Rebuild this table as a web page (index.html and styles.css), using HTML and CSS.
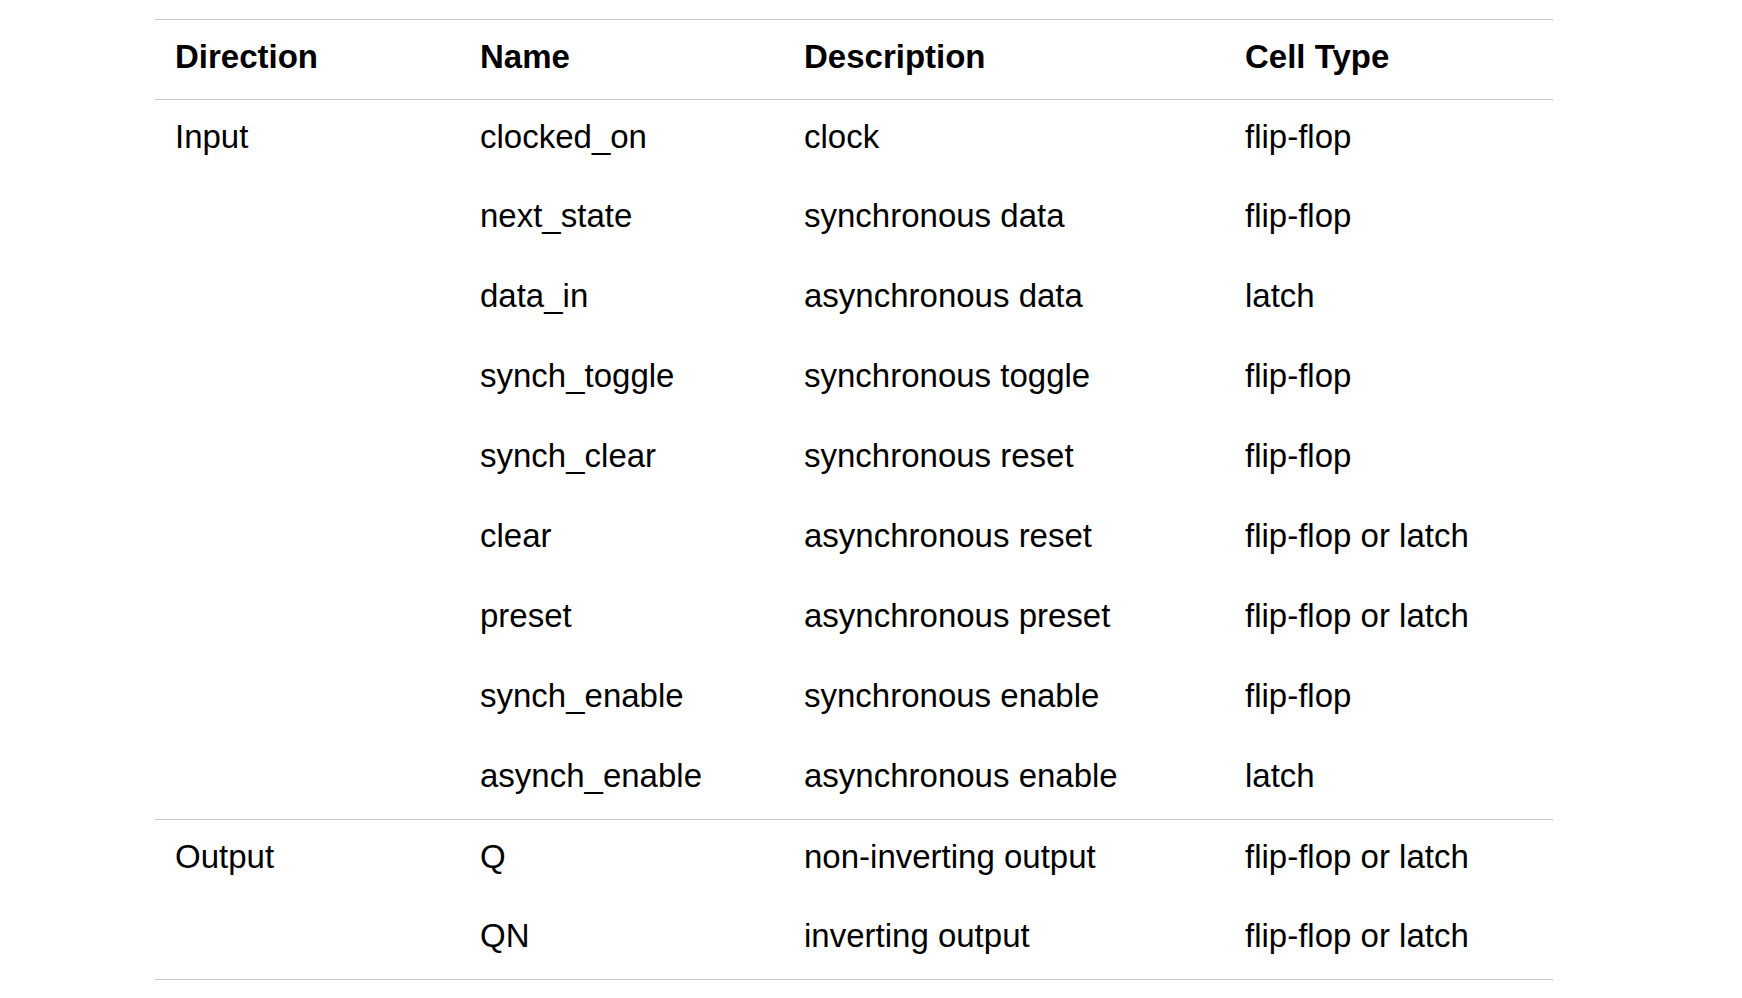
FILE: index.html
```html
<!DOCTYPE html>
<html>
<head>
<meta charset="utf-8">
<link rel="stylesheet" href="styles.css">
</head>
<body>
<div class="pins" role="table">
  <div class="row head start" role="row">
    <div class="cell" role="columnheader">Direction</div>
    <div class="cell" role="columnheader">Name</div>
    <div class="cell" role="columnheader">Description</div>
    <div class="cell" role="columnheader">Cell Type</div>
  </div>
  <div class="row start" role="row"><div class="cell">Input</div><div class="cell">clocked_on</div><div class="cell">clock</div><div class="cell">flip-flop</div></div>
  <div class="row" role="row"><div class="cell"></div><div class="cell">next_state</div><div class="cell">synchronous data</div><div class="cell">flip-flop</div></div>
  <div class="row" role="row"><div class="cell"></div><div class="cell">data_in</div><div class="cell">asynchronous data</div><div class="cell">latch</div></div>
  <div class="row" role="row"><div class="cell"></div><div class="cell">synch_toggle</div><div class="cell">synchronous toggle</div><div class="cell">flip-flop</div></div>
  <div class="row" role="row"><div class="cell"></div><div class="cell">synch_clear</div><div class="cell">synchronous reset</div><div class="cell">flip-flop</div></div>
  <div class="row" role="row"><div class="cell"></div><div class="cell">clear</div><div class="cell">asynchronous reset</div><div class="cell">flip-flop or latch</div></div>
  <div class="row" role="row"><div class="cell"></div><div class="cell">preset</div><div class="cell">asynchronous preset</div><div class="cell">flip-flop or latch</div></div>
  <div class="row" role="row"><div class="cell"></div><div class="cell">synch_enable</div><div class="cell">synchronous enable</div><div class="cell">flip-flop</div></div>
  <div class="row" role="row"><div class="cell"></div><div class="cell">asynch_enable</div><div class="cell">asynchronous enable</div><div class="cell">latch</div></div>
  <div class="row start" role="row"><div class="cell">Output</div><div class="cell">Q</div><div class="cell">non-inverting output</div><div class="cell">flip-flop or latch</div></div>
  <div class="row" role="row"><div class="cell"></div><div class="cell">QN</div><div class="cell">inverting output</div><div class="cell">flip-flop or latch</div></div>
</div>
</body>
</html>
```
FILE: styles.css
```css
html, body {
  margin: 0;
  padding: 0;
  background: #ffffff;
}
body {
  padding-top: 19px;
  font-family: "Liberation Sans", Arial, Helvetica, sans-serif;
  color: #000000;
}
.pins {
  margin-left: 155px;
  width: 1398px;
  font-size: 33px;
  border-bottom: 1px solid #c8c8c8;
}
.row {
  display: grid;
  grid-template-columns: 305px 324px 441px 328px;
  align-items: center;
  height: 80px;
  box-sizing: border-box;
  padding-bottom: 6px;
}
.row.start {
  border-top: 1px solid #c8c8c8;
}
.cell {
  padding-left: 20px;
  white-space: nowrap;
  line-height: normal;
}
.head .cell {
  font-weight: bold;
}
```
